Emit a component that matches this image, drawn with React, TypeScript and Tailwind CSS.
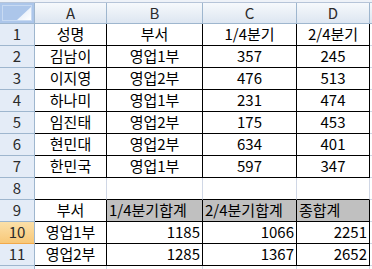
import React from 'react';

const FONT = { fontFamily: '"Malgun Gothic", "Noto Sans CJK KR", sans-serif' };

type Align = 'center' | 'left' | 'right';

type CellProps = {
  children?: React.ReactNode;
  align?: Align;
  gray?: boolean;
  light?: boolean;
};

function Cell({ children, align = 'center', gray, light }: CellProps) {
  const justify = align === 'center' ? 'justify-center' : align === 'left' ? 'justify-start pl-[2px]' : 'justify-end pr-[2px]';
  return (
    <div
      className={`flex items-center overflow-hidden whitespace-nowrap border-r border-b border-b-black text-[15px] text-black ${justify} ${
        gray ? 'bg-[#c0c0c0]' : 'bg-white'
      } ${light ? 'border-r-[#d0d7e5]' : 'border-r-black'}`}
    >
      {children}
    </div>
  );
}

function RowHead({ n, active }: { n: number; active?: boolean }) {
  return (
    <div
      className={`flex items-center justify-center border-r border-b border-r-[#9eb6ce] text-[15px] text-[#2b2b2b] ${
        active
          ? 'bg-gradient-to-b from-[#fbe0a8] to-[#f8c878] border-b-[#f2a94a]'
          : 'bg-[#e4ecf7] border-b-[#9eb6ce]'
      }`}
    >
      {n}
    </div>
  );
}

function ColHead({ label }: { label: string }) {
  return (
    <div className="flex items-center justify-center border-r border-b border-[#9eb6ce] bg-gradient-to-b from-[#f6f9fc] to-[#dde6f1] text-[15px] text-[#2b2b2b]">
      {label}
    </div>
  );
}

const people = [
  ['김남이', '영업1부', '357', '245'],
  ['이지영', '영업2부', '476', '513'],
  ['하나미', '영업1부', '231', '474'],
  ['임진태', '영업2부', '175', '453'],
  ['현민대', '영업2부', '634', '401'],
  ['한민국', '영업1부', '597', '347'],
];

const totals = [
  ['영업1부', '1185', '1066', '2251'],
  ['영업2부', '1285', '1367', '2652'],
];

export default function App() {
  return (
    <div
      className="grid h-[269px] w-[372px] overflow-hidden bg-white grid-cols-[35px_72px_96px_94px_73px_1fr] grid-rows-[3px_21px_repeat(11,22px)_1fr]"
      style={FONT}
    >
      {/* formula bar edge */}
      <div className="col-span-6 border-b border-[#b6c4d8] bg-[#eef2f8]" />

      {/* column headers */}
      <div className="relative border-r border-b border-[#9eb6ce] bg-[#acc6ea] p-[2px]">
        <div className="h-full w-full border border-[#c8daf2]" />
        <svg className="absolute right-[3px] bottom-[3px]" width="14" height="13" viewBox="0 0 14 13">
          <defs>
            <linearGradient id="tri" x1="0" y1="0" x2="1" y2="1">
              <stop offset="0" stopColor="#dbe7f7" />
              <stop offset="1" stopColor="#ffffff" />
            </linearGradient>
          </defs>
          <polygon points="14,0 14,13 0,13" fill="url(#tri)" />
        </svg>
      </div>
      <ColHead label="A" />
      <ColHead label="B" />
      <ColHead label="C" />
      <ColHead label="D" />
      <div className="border-b border-[#9eb6ce] bg-gradient-to-b from-[#f6f9fc] to-[#dde6f1]" />

      {/* row 1 */}
      <RowHead n={1} />
      <Cell>성명</Cell>
      <Cell>부서</Cell>
      <Cell>1/4분기</Cell>
      <Cell>2/4분기</Cell>
      <div className="border-b border-[#d0d7e5]" />

      {people.map((p, i) => (
        <React.Fragment key={i}>
          <RowHead n={i + 2} />
          <Cell>{p[0]}</Cell>
          <Cell>{p[1]}</Cell>
          <Cell>{p[2]}</Cell>
          <Cell>{p[3]}</Cell>
          <div className="border-b border-[#d0d7e5]" />
        </React.Fragment>
      ))}

      {/* row 8 */}
      <RowHead n={8} />
      <Cell light />
      <Cell light />
      <Cell light />
      <Cell light />
      <div className="border-b border-[#d0d7e5]" />

      {/* row 9 */}
      <RowHead n={9} />
      <Cell>부서</Cell>
      <Cell align="left" gray>
        1/4분기합계
      </Cell>
      <Cell align="left" gray>
        2/4분기합계
      </Cell>
      <Cell align="left" gray>
        종합계
      </Cell>
      <div className="border-b border-[#d0d7e5]" />

      {totals.map((t, i) => (
        <React.Fragment key={i}>
          <RowHead n={i + 10} active={i === 0} />
          <Cell>{t[0]}</Cell>
          <Cell align="right">{t[1]}</Cell>
          <Cell align="right">{t[2]}</Cell>
          <Cell align="right">{t[3]}</Cell>
          <div className="border-b border-[#d0d7e5]" />
        </React.Fragment>
      ))}

      {/* row 12 partial */}
      <div className="border-r border-[#9eb6ce] bg-[#e4ecf7]" />
      <div className="border-r border-[#d0d7e5]" />
      <div className="border-r border-[#d0d7e5]" />
      <div className="border-r border-[#d0d7e5]" />
      <div className="border-r border-[#d0d7e5]" />
      <div />
    </div>
  );
}
